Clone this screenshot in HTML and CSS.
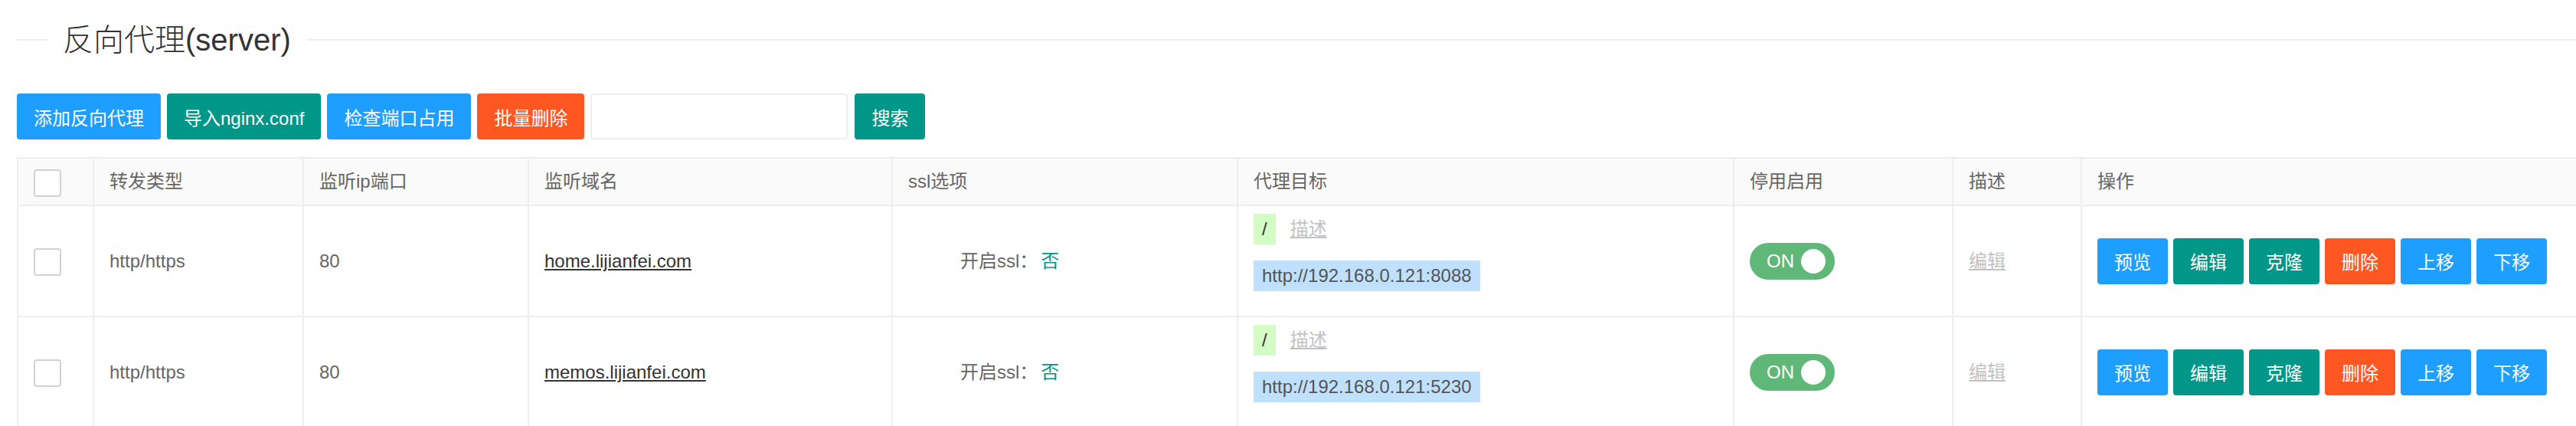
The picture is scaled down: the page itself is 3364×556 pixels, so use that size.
FILE: index.html
```html
<!DOCTYPE html>
<html lang="zh-CN">
<head>
<meta charset="utf-8">
<title>反向代理(server)</title>
<link rel="stylesheet" href="styles.css">
</head>
<body>
<div class="page">
  <div class="field-title"><span class="legend">反向代理(server)</span></div>

  <div class="toolbar">
    <button class="btn btn-blue">添加反向代理</button>
    <button class="btn btn-green">导入nginx.conf</button>
    <button class="btn btn-blue">检查端口占用</button>
    <button class="btn btn-red">批量删除</button>
    <input class="search-input" type="text">
    <button class="btn btn-green">搜索</button>
  </div>

  <table class="grid">
    <colgroup>
      <col class="c-check"><col class="c-type"><col class="c-port"><col class="c-domain"><col class="c-ssl"><col class="c-target"><col class="c-switch"><col class="c-desc"><col class="c-ops">
    </colgroup>
    <thead>
      <tr>
        <th><span class="checkbox"></span></th>
        <th>转发类型</th>
        <th>监听ip端口</th>
        <th>监听域名</th>
        <th>ssl选项</th>
        <th>代理目标</th>
        <th>停用启用</th>
        <th>描述</th>
        <th>操作</th>
      </tr>
    </thead>
    <tbody>
      <tr>
        <td><span class="checkbox"></span></td>
        <td>http/https</td>
        <td>80</td>
        <td><a class="domain">home.lijianfei.com</a></td>
        <td><span class="ssl">开启ssl：<span class="ssl-no">否</span></span></td>
        <td class="target">
          <div class="target-path"><span class="path-tag">/</span><a class="muted-link">描述</a></div>
          <div class="target-url"><span class="url-tag">http://192.168.0.121:8088</span></div>
        </td>
        <td><span class="switch"><em>ON</em><i class="knob"></i></span></td>
        <td><a class="muted-link">编辑</a></td>
        <td>
          <div class="ops">
            <button class="btn btn-blue">预览</button>
            <button class="btn btn-green">编辑</button>
            <button class="btn btn-green">克隆</button>
            <button class="btn btn-red">删除</button>
            <button class="btn btn-blue">上移</button>
            <button class="btn btn-blue">下移</button>
          </div>
        </td>
      </tr>
      <tr>
        <td><span class="checkbox"></span></td>
        <td>http/https</td>
        <td>80</td>
        <td><a class="domain">memos.lijianfei.com</a></td>
        <td><span class="ssl">开启ssl：<span class="ssl-no">否</span></span></td>
        <td class="target">
          <div class="target-path"><span class="path-tag">/</span><a class="muted-link">描述</a></div>
          <div class="target-url"><span class="url-tag">http://192.168.0.121:5230</span></div>
        </td>
        <td><span class="switch"><em>ON</em><i class="knob"></i></span></td>
        <td><a class="muted-link">编辑</a></td>
        <td>
          <div class="ops">
            <button class="btn btn-blue">预览</button>
            <button class="btn btn-green">编辑</button>
            <button class="btn btn-green">克隆</button>
            <button class="btn btn-red">删除</button>
            <button class="btn btn-blue">上移</button>
            <button class="btn btn-blue">下移</button>
          </div>
        </td>
      </tr>
    </tbody>
  </table>
</div>
</body>
</html>
```

FILE: styles.css
```css
* { box-sizing: border-box; }

html, body {
  margin: 0;
  padding: 0;
  background: #fff;
  overflow: hidden;
}

body {
  font-family: "Liberation Sans", "Noto Sans CJK SC", sans-serif;
  color: #666;
  font-size: 24px;
}

.page {
  padding-left: 22px;
  width: 3364px;
}

/* fieldset-like title */
.field-title {
  display: flex;
  align-items: center;
  height: 60px;
  margin-top: 22px;
}
.field-title::before {
  content: "";
  width: 40px;
  height: 2px;
  background: #eee;
}
.field-title::after {
  content: "";
  flex: 1;
  height: 2px;
  background: #eee;
}
.legend {
  padding: 0 20px;
  font-size: 40px;
  font-weight: 300;
  line-height: 60px;
  color: #333;
}

/* toolbar */
.toolbar {
  display: flex;
  gap: 8px;
  margin-top: 40px;
  height: 60px;
}

.btn {
  display: inline-flex;
  align-items: center;
  justify-content: center;
  height: 60px;
  padding: 0 22px;
  border: 0;
  border-radius: 4px;
  font-family: "Liberation Sans", "Noto Sans CJK SC", sans-serif;
  font-size: 24px;
  color: #fff;
  white-space: nowrap;
}
.btn-blue { background: #1e9fff; }
.btn-green { background: #009688; }
.btn-red { background: #ff5722; }

.search-input {
  width: 336px;
  height: 60px;
  border: 2px solid #eee;
  border-radius: 4px;
  background: #fff;
  margin-right: 1px;
}

/* table */
.grid {
  margin-top: 23px;
  border-collapse: collapse;
  table-layout: fixed;
  width: 3375px;
}
.c-check { width: 99px; }
.c-type { width: 274px; }
.c-port { width: 294px; }
.c-domain { width: 475px; }
.c-ssl { width: 451px; }
.c-target { width: 648px; }
.c-switch { width: 286px; }
.c-desc { width: 168px; }
.c-ops { width: 680px; }

.grid th,
.grid td {
  border: 2px solid #eee;
  padding: 10px 20px;
  line-height: 40px;
  font-size: 24px;
  font-weight: normal;
  color: #666;
  text-align: left;
  vertical-align: middle;
  white-space: nowrap;
}
.grid thead tr { background: #fafafa; }

.checkbox {
  display: inline-block;
  width: 36px;
  height: 36px;
  border: 2px solid #d2d2d2;
  border-radius: 4px;
  background: #fff;
  vertical-align: middle;
}

.domain {
  color: #333;
  text-decoration: underline;
}

.ssl { margin-left: 68px; }
.ssl-no {
  color: #009688;
  margin-left: 4px;
}

.grid td.target { padding-top: 10px; padding-bottom: 10px; }
.target-path {
  display: flex;
  align-items: center;
  height: 40px;
  margin-bottom: 21px;
}
.path-tag {
  display: inline-block;
  height: 40px;
  line-height: 40px;
  padding: 0 11px;
  background: #d3fdc5;
  color: #333;
}
.muted-link {
  color: #c2c2c2;
  text-decoration: underline;
}
.target-path .muted-link { margin-left: 19px; }
.target-url {
  height: 40px;
  margin-bottom: 22px;
}
.url-tag {
  display: inline-block;
  height: 40px;
  line-height: 40px;
  padding: 0 11px;
  background: #bfe0ff;
  color: #555;
}

.switch {
  display: inline-flex;
  align-items: center;
  width: 111px;
  height: 48px;
  padding-left: 22px;
  border-radius: 24px;
  background: #5fb878;
  vertical-align: middle;
}
.switch em {
  font-style: normal;
  font-size: 24px;
  line-height: 1;
  color: #fff;
}
.knob {
  width: 32px;
  height: 32px;
  margin-left: auto;
  margin-right: 12px;
  border-radius: 50%;
  background: #fff;
}

.ops {
  display: flex;
  gap: 7px;
}
.ops .btn {
  width: 92px;
  padding: 0;
}
```
